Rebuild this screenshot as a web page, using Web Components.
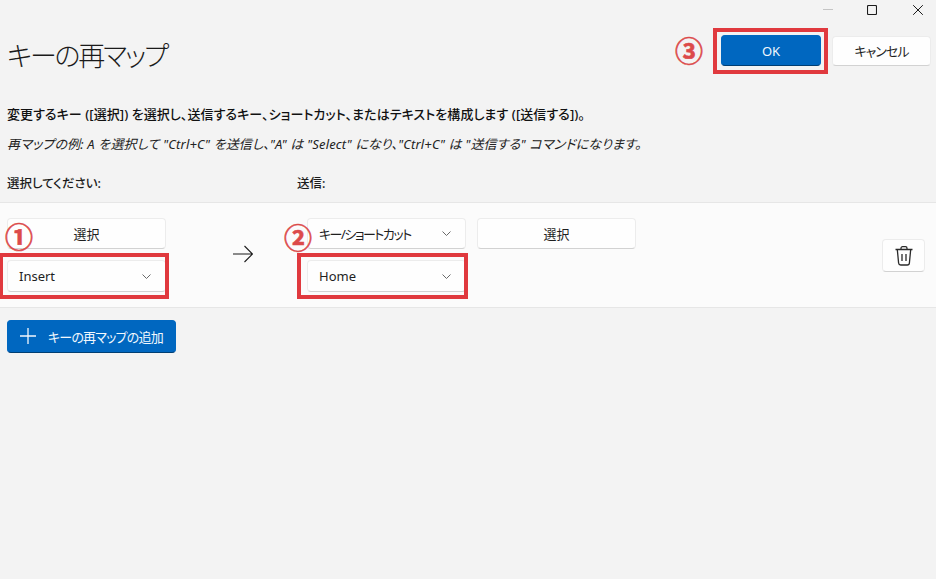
<!DOCTYPE html>
<html lang="ja">
<head>
<meta charset="utf-8">
<title>キーの再マップ</title>
<style>
  html, body { margin: 0; height: 100%; }
  body {
    background: #f3f3f3;
    color: #1b1b1b;
    font-family: "Noto Sans", "Noto Sans CJK JP", sans-serif;
    font-feature-settings: "palt";
    overflow: hidden;
  }
</style>
</head>
<body>
<remap-page></remap-page>

<script>
// flat button, white by default, "accent" makes it blue
class KmButton extends HTMLElement {
  constructor() {
    super();
    this.attachShadow({ mode: 'open' });
    this.shadowRoot.innerHTML = `
      <style>
        :host {
          display: flex;
          align-items: center;
          justify-content: center;
          box-sizing: border-box;
          width: var(--w, 159px);
          height: var(--h, 31px);
          padding-bottom: var(--pb, 1px);
          background: #fefefe;
          border: 1px solid #ececec;
          border-bottom-color: #d2d2d2;
          border-radius: 4px;
          font-size: 13px;
          color: #1f1f1f;
        }
        :host([accent]) {
          background: #0067c0;
          border-color: #0067c0;
          border-bottom-color: #003e73;
          color: #f2f8fd;
        }
      </style>
      <slot></slot>
    `;
  }
}

class KmDropdown extends HTMLElement {
  constructor() {
    super();
    this.attachShadow({ mode: 'open' });
    this.shadowRoot.innerHTML = `
      <style>
        :host {
          display: flex;
          align-items: center;
          justify-content: space-between;
          box-sizing: border-box;
          width: 159px;
          height: var(--h, 31px);
          padding: 0 14px 0 11px;
          background: #fefefe;
          border: 1px solid #ececec;
          border-bottom-color: #d2d2d2;
          border-radius: 4px;
          font-size: 13px;
          color: #1f1f1f;
        }
        svg { display: block; flex: none; }
      </style>
      <slot></slot>
      <svg width="9" height="5" viewBox="0 0 9 5" fill="none" stroke="#6a6a6a" stroke-width="1">
        <path d="M.5.5l4 4 4-4"/>
      </svg>
    `;
  }
}

// red box + circled number drawn on top of the screenshot
class KmCallout extends HTMLElement {
  constructor() {
    super();
    this.attachShadow({ mode: 'open' });
    this.shadowRoot.innerHTML = `
      <style>
        :host { display: block; position: relative; width: fit-content; }
        .box {
          position: absolute;
          left: var(--box-l, -8px);
          top: var(--box-t, -7px);
          right: var(--box-r, -3px);
          bottom: var(--box-b, -7px);
          border: 4px solid #e0393e;
          pointer-events: none;
        }
        .num {
          position: absolute;
          left: var(--num-l);
          top: var(--num-t);
          width: 28px;
          height: 28px;
          line-height: 28px;
          text-align: center;
          font-family: "Noto Sans CJK JP", sans-serif;
          font-size: 28px;
          font-weight: 700;
          color: #dc4a4a;
          -webkit-text-stroke: 0.6px #dc4a4a;
        }
      </style>
      <slot></slot>
      <div class="box"></div>
      <div class="num">${this.getAttribute('num') || ''}</div>
    `;
  }
}

class KmCaption extends HTMLElement {
  constructor() {
    super();
    this.attachShadow({ mode: 'open' });
    this.shadowRoot.innerHTML = `
      <style>
        :host { display: flex; justify-content: flex-end; height: 28px; padding-right: 13px; }
        svg { display: block; margin-top: 5px; }
      </style>
      <svg width="10" height="10" viewBox="0 0 10 10" stroke="#c4c4c4" fill="none"><path d="M0 4.500h10"/></svg>
      <svg style="margin-left:34px" width="10" height="10" viewBox="0 0 10 10" stroke="#1b1b1b" stroke-width="1.100" fill="none"><rect x=".5" y=".5" width="9" height="9" rx="1"/></svg>
      <svg style="margin-left:36px" width="10" height="10" viewBox="0 0 10 10" stroke="#1b1b1b" fill="none"><path d="M.2.2l9.600 9.600M9.800.2.2 9.800"/></svg>
    `;
  }
}

class KmRemapRow extends HTMLElement {
  constructor() {
    super();
    this.attachShadow({ mode: 'open' });
    this.shadowRoot.innerHTML = `
      <style>
        :host {
          display: flex;
          box-sizing: border-box;
          height: 106px;
          padding: 15px 11px 0 7px;
          background: #fbfbfb;
          border-top: 1px solid #e6e6e6;
          border-bottom: 1px solid #e6e6e6;
        }
        .col { display: flex; flex-direction: column; gap: 11px; }
        .arrow { width: 141px; display: flex; justify-content: center; padding: 27px 0 0 12px; box-sizing: border-box; }
        .arrow svg { display: block; }
        .extra { margin-left: 11px; }
        .del {
          margin: 21px 0 0 auto;
          --w: 43px;
          --h: 33px;
          --pb: 0;
        }
        .tight { letter-spacing: -1.5px; }
        km-callout km-dropdown { --h: 32px; }
        .hi {
          --num-l: -2px;
          --num-t: -38px;
        }
        .hi2 {
          --num-l: -23px;
          --num-t: -37px;
          --box-l: -10px;
          --box-r: -2px;
        }
      </style>
      <div class="col">
        <km-button>選択</km-button>
        <km-callout class="hi" num="①"><km-dropdown>Insert</km-dropdown></km-callout>
      </div>
      <div class="arrow">
        <svg width="20" height="18" viewBox="0 0 20 18" fill="none" stroke="#1b1b1b" stroke-width="1.100"><path d="M0 9h19.500M11.500 1 19.500 9l-8 8"/></svg>
      </div>
      <div class="col">
        <km-dropdown><span class="tight">キー/ショートカット</span></km-dropdown>
        <km-callout class="hi2" num="②"><km-dropdown>Home</km-dropdown></km-callout>
      </div>
      <km-button class="extra">選択</km-button>
      <km-button class="del">
        <svg width="18" height="20" viewBox="0 0 18 20" fill="none" stroke="#2a2a2a" stroke-width="1.300">
          <path d="M.5 3.500h17M6 3.500V2.200C6 1.300 6.700.7 7.500.7h3c.8 0 1.500.6 1.500 1.500v1.300"/>
          <path d="M2.300 3.500 3.600 17c.1 1.200.9 2 2.100 2h6.600c1.200 0 2-.8 2.100-2l1.300-13.500"/>
          <path d="M7 8v7M11 8v7"/>
        </svg>
      </km-button>
    `;
  }
}

class RemapPage extends HTMLElement {
  constructor() {
    super();
    this.attachShadow({ mode: 'open' });
    this.shadowRoot.innerHTML = `
      <style>
        :host { display: block; }
        header {
          display: flex;
          align-items: flex-start;
          justify-content: space-between;
          height: 70px;
          padding: 7px 5px 0 7px;
        }
        h1 {
          margin: 1px 0 0;
          font-size: 27px;
          font-weight: 300;
          line-height: 40px;
          letter-spacing: -2.200px;
          color: #1a1a1a;
        }
        .actions { display: flex; gap: 11px; }
        .ok { --box-l: -8px; --box-r: -7px; --box-t: -7px; --box-b: -8px; --num-l: -46px; --num-t: 1px; }
        .ok km-button { --w: 100px; --pb: 0; font-size: 13px; }
        .cancel { --w: 99px; --pb: 2px; margin-top: 1px; --h: 30px; letter-spacing: -1px; }
        .desc { padding: 0 7px; }
        p { margin: 0; font-size: 13px; line-height: 18px; white-space: nowrap; }
        .lead { font-weight: 500; letter-spacing: 0.06px; color: #111; }
        .example { margin-top: 12px; font-style: italic; letter-spacing: 0.15px; color: #222; }
        .labels { display: flex; padding: 0 7px; margin-top: 22px; height: 27px; font-size: 12.5px; font-weight: 500; line-height: 18px; }
        .labels span:first-child { width: 290px; }
        .add {
          display: flex;
          justify-content: flex-start;
          margin: 12px 0 0 7px;
          padding-left: 12px;
          --w: 169px;
          --h: 33px;
          gap: 12px;
        }
        .add svg { display: block; flex: none; }
        .add span { letter-spacing: -0.8px; }
      </style>
      <km-caption></km-caption>
      <header>
        <h1>キーの再マップ</h1>
        <div class="actions">
          <km-callout class="ok" num="③"><km-button accent>OK</km-button></km-callout>
          <km-button class="cancel">キャンセル</km-button>
        </div>
      </header>
      <div class="desc">
        <p class="lead">変更するキー ([選択]) を選択し、送信するキー、ショートカット、またはテキストを構成します ([送信する])。</p>
        <p class="example">再マップの例: A を選択して "Ctrl+C" を送信し、"A" は "Select" になり、"Ctrl+C" は "送信する" コマンドになります。</p>
      </div>
      <div class="labels"><span>選択してください:</span><span>送信:</span></div>
      <km-remap-row></km-remap-row>
      <km-button accent class="add">
        <svg width="16" height="16" viewBox="0 0 16 16" stroke="#f2f8fd" stroke-width="1.300"><path d="M8 0v16M0 8h16"/></svg>
        <span>キーの再マップの追加</span>
      </km-button>
    `;
  }
}

customElements.define('km-button', KmButton);
customElements.define('km-dropdown', KmDropdown);
customElements.define('km-callout', KmCallout);
customElements.define('km-caption', KmCaption);
customElements.define('km-remap-row', KmRemapRow);
customElements.define('remap-page', RemapPage);
</script>
</body>
</html>
